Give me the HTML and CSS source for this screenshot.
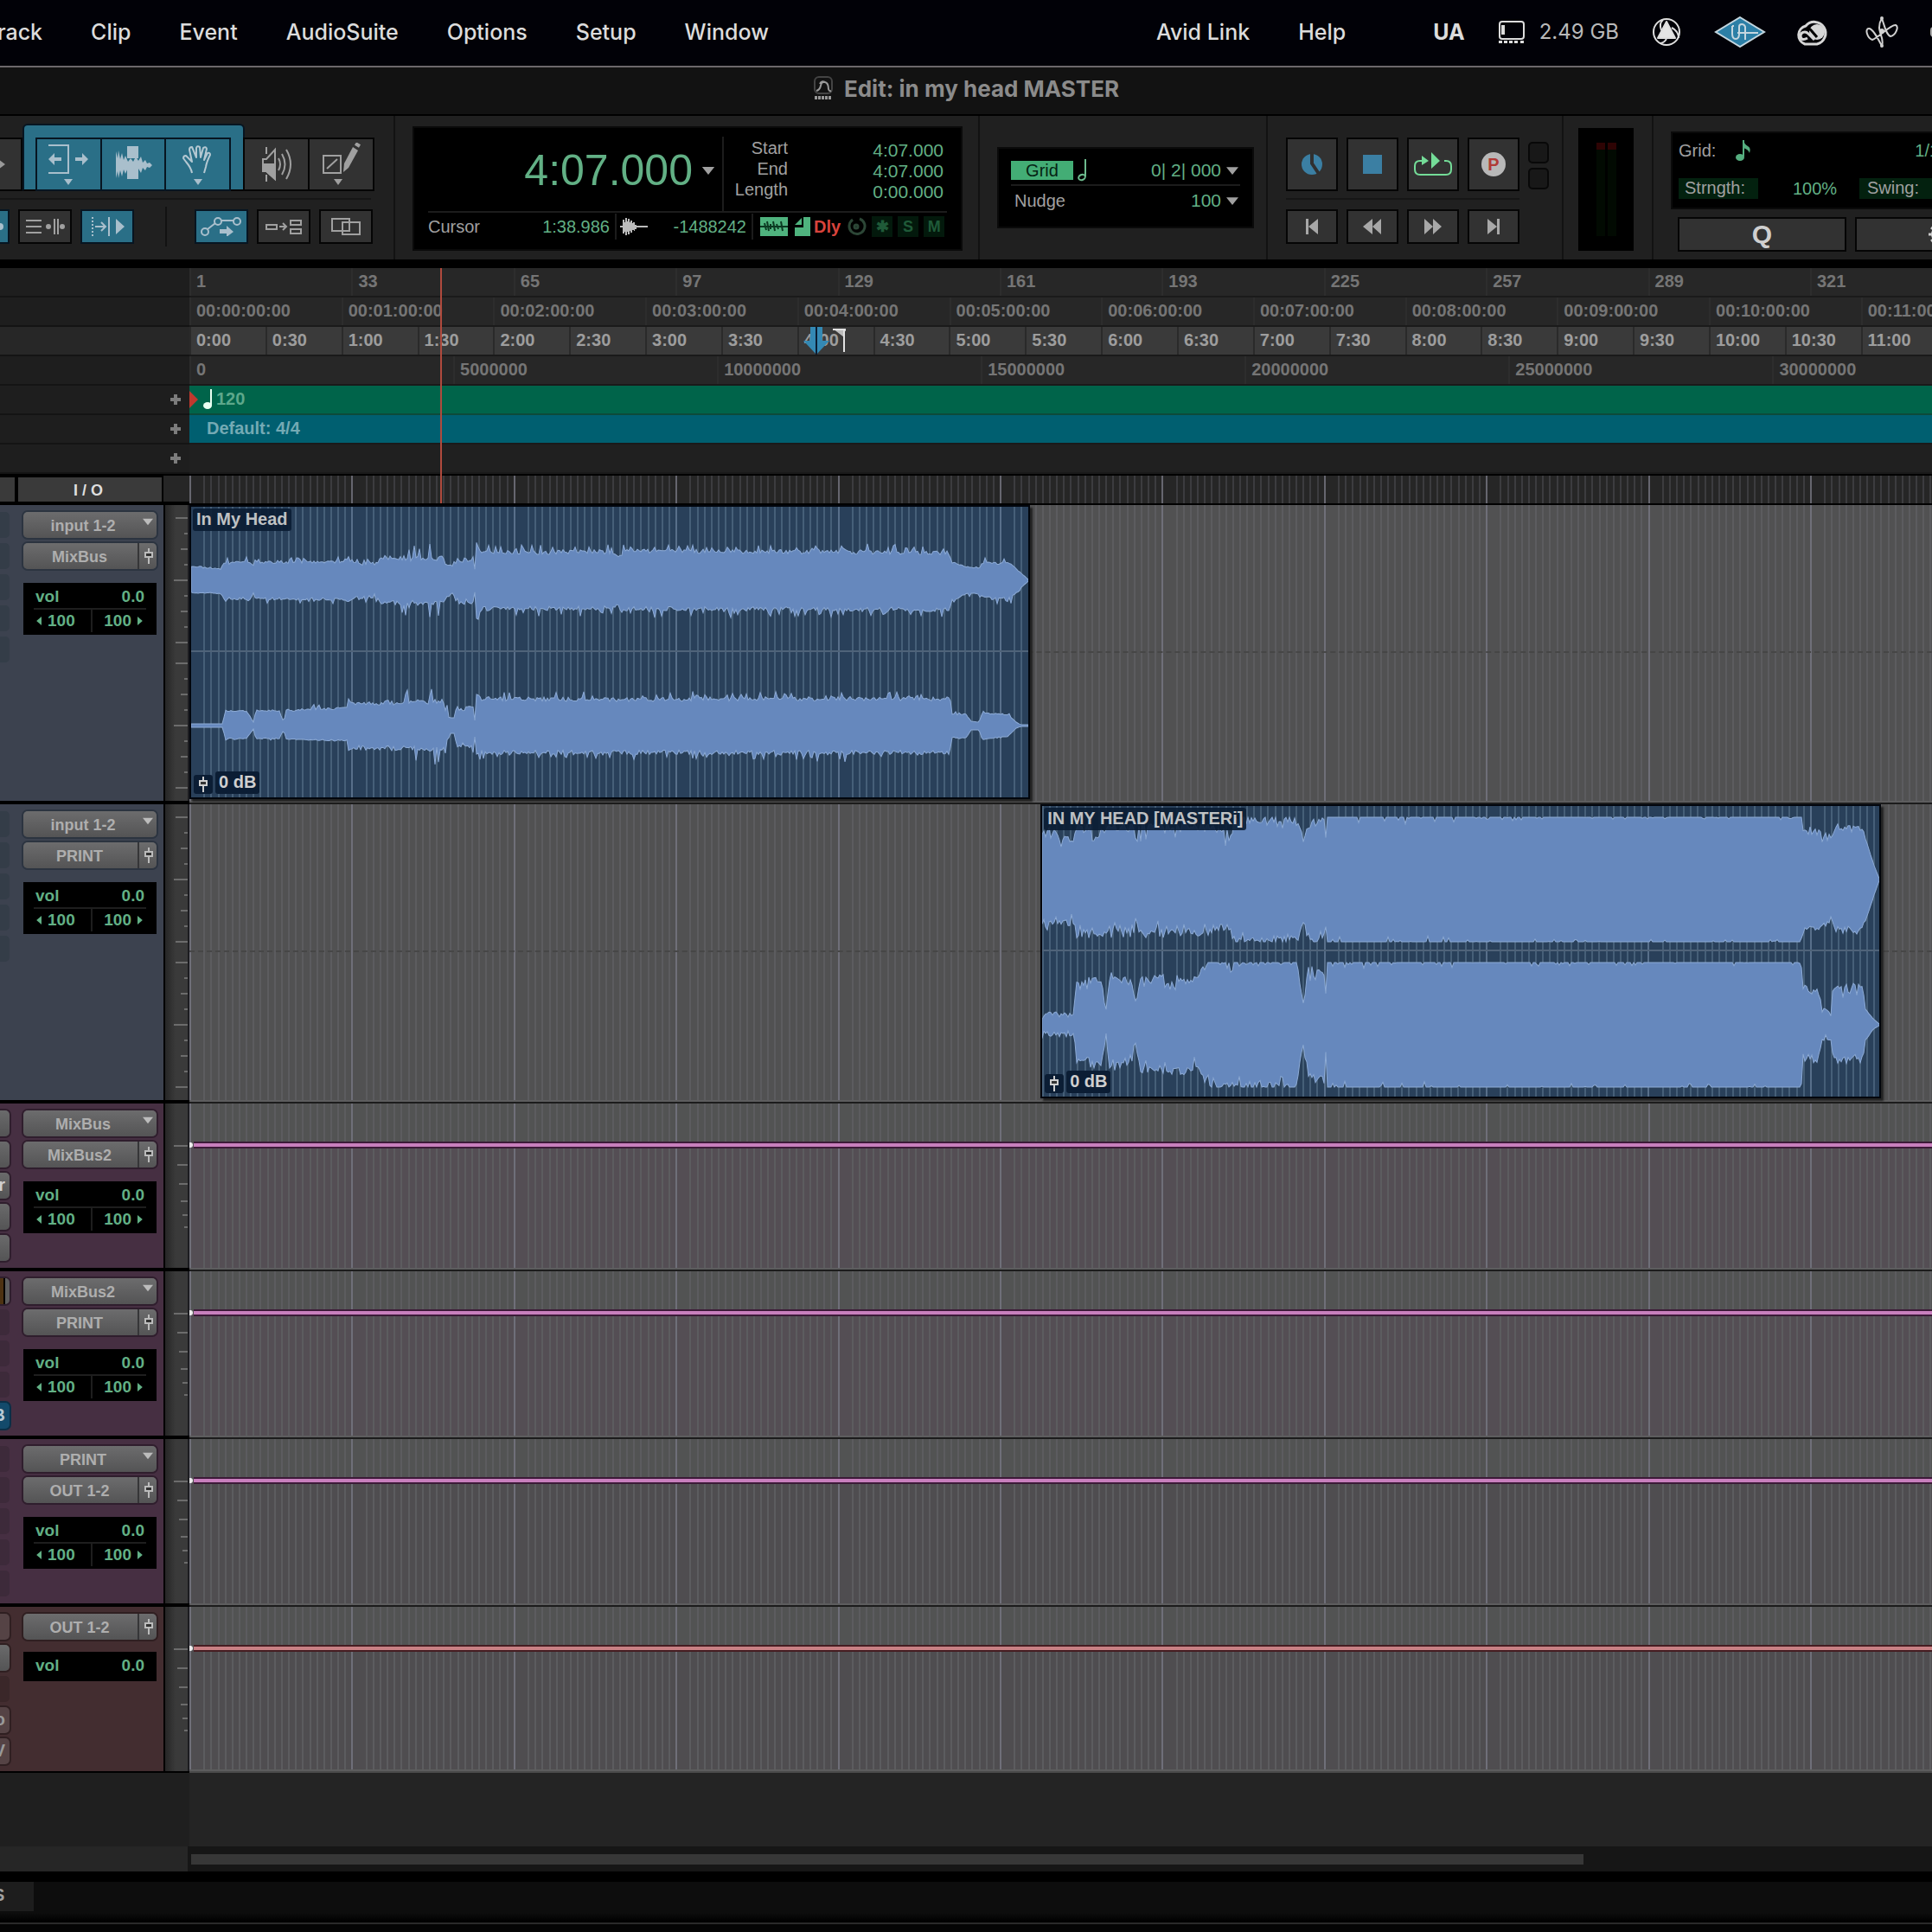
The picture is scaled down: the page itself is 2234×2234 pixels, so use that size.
FILE: index.html
```html
<!DOCTYPE html>
<html lang="en">
<head>
<meta charset="utf-8">
<title>Edit: in my head MASTER</title>
<link rel="stylesheet" href="styles.css">
</head>
<body>
<svg class="defs" aria-hidden="true">
  <symbol id="fader" viewBox="0 0 12 20"><path d="M6 1v18" stroke="currentColor" stroke-width="2"/><rect x="2" y="6" width="8" height="5" fill="#333" stroke="currentColor" stroke-width="2"/></symbol>
  <symbol id="down" viewBox="0 0 16 10"><path d="M0 0h16l-8 10z" fill="currentColor"/></symbol>
  <symbol id="left" viewBox="0 0 8 12"><path d="M7 0v12L0 6z" fill="currentColor"/></symbol>
  <symbol id="right" viewBox="0 0 8 12"><path d="M1 0v12l7-6z" fill="currentColor"/></symbol>
  <symbol id="plus" viewBox="0 0 14 14"><path d="M7 1v12M1 7h12" stroke="currentColor" stroke-width="4"/></symbol>
  <symbol id="scale-audio" viewBox="0 0 26 342"><path d="M12 15h14M22 33h4M18 51h8M22 69h4M10 87h16M22 105h4M18 123h8M22 141h4M12 159h14M12 183h14M22 201h4M18 219h8M22 237h4M10 255h16M22 273h4M18 291h8M22 309h4M12 327h14" stroke="#6c6c6c" stroke-width="2"/></symbol>
  <symbol id="scale-vol" viewBox="0 0 26 190"><path d="M10 49h16M14 71h12M16 93h10M18 113h8M20 129h6M22 143h4" stroke="#6c6c6c" stroke-width="2"/></symbol>
</svg>

<nav class="menubar" aria-label="Application menu">
  <div class="menus">
    <a href="#track">Track</a><a href="#clip">Clip</a><a href="#event">Event</a><a href="#audiosuite">AudioSuite</a><a href="#options">Options</a><a href="#setup">Setup</a><a href="#window">Window</a>
  </div>
  <div class="menus second"><a href="#avid">Avid Link</a><a href="#help">Help</a></div>
  <div class="status">
    <b class="ua">UA</b>
    <span class="mem">
      <svg width="32" height="28" viewBox="0 0 32 28" fill="none" stroke="#dcdcdc" stroke-width="2"><rect x="2" y="2" width="28" height="20" rx="3"/><path d="M6 6v11" stroke-width="4"/><path d="M3 24v3M9 24v3M15 24v3M21 24v3M28 24v3" stroke-width="4"/></svg>
      2.49 GB
    </span>
    <svg class="i1" width="34" height="34" viewBox="0 0 34 34" fill="none" stroke="#dedede" stroke-width="2"><circle cx="17" cy="17" r="15"/><path d="M17 5 27 24H7z" fill="#e4e4e4" stroke-linejoin="round"/><path d="M23 12q8 4 8 12M13 3Q8 7 11 15M9 30q5 0 8-5"/></svg>
    <svg class="i2" width="60" height="36" viewBox="0 0 60 36" fill="none"><path d="M30 1 58 18 30 35 2 18z" fill="#2c7fa6" stroke="#c4d6df" stroke-width="2"/><path d="M21 11v9q0 6 4 6t4-6V12q0-3 3-3t4 3v15M27 19h24M21 11h2" stroke="#c4d6df" stroke-width="2"/></svg>
    <svg class="i3" width="42" height="32" viewBox="0 0 42 32" fill="none" stroke="#d6d6d6"><path d="M13 30h14a13 13 0 1 0-13-21 11 11 0 0 0-1 21z" stroke-width="3"/><circle cx="27" cy="16" r="9" fill="#d6d6d6" stroke="none"/><path d="M16 23q-7 4-8-2 0-5 5-5 2 0 4 2l7 7" stroke-width="3"/><path d="M15 12q4 0 6 3l6 7" stroke="#000" stroke-width="3"/></svg>
    <svg class="i4" width="40" height="38" viewBox="0 0 40 38" fill="none" stroke="#d0d0d0" stroke-width="2" stroke-linejoin="round"><path d="M20 3C23 12 25 22 30 24 36 23 40 13 36 11 30 10 16 26 9 28 3 26 0 15 5 15 10 15 16 28 20 35 23 28 17 20 17 14Q17 8 20 3"/><circle cx="20" cy="3" r="1"/><circle cx="20" cy="35" r="1"/><circle cx="20" cy="18" r="2" fill="#d0d0d0"/></svg>
    <svg class="i5" width="30" height="12"><rect width="30" height="12" rx="4" fill="#aaa"/></svg>
  </div>
</nav>

<header class="titlebar">
  <svg width="24" height="30" viewBox="0 0 24 30" fill="none" stroke="#999" stroke-width="2"><rect x="2" y="1" width="20" height="19" rx="5" stroke="#444"/><path d="M4 17q4-1 5-6 1-5 5-4t4 8q1 3 3 2M8 9q2-4 6-2"/><path d="M2 25h20" stroke-width="4" stroke-dasharray="3 1"/></svg>
  <h1>Edit: in my head MASTER</h1>
</header>

<section class="toolbar">
  <div class="panel tools">
    <div class="row big">
      <button class="tool stub" aria-label="Zoom"><svg width="10" height="18" viewBox="0 0 10 18"><path d="M-6 0 6 9-6 18z" fill="#999"/></svg></button>
      <div class="smart">
        <button class="tool on" aria-label="Trim"><svg width="50" height="50" viewBox="0 0 50 50" fill="none" stroke="#a9bfcc" stroke-width="2"><path d="M2 3h23v32H2"/><path d="m2 19 7-7v5h8v4H9v5zM48 19l-7-7v5h-8v4h8v5z" fill="#a9bfcc" stroke="none"/><path d="M20 42h10l-5 7z" fill="#a9bfcc" stroke="none"/></svg></button>
        <button class="tool on" aria-label="Select"><svg width="50" height="50" viewBox="0 0 50 50" fill="#a9bfcc"><path d="M18 4h13v14H18zM18 28h13v14H18z"/><path d="M5 10l2 8 1-9 2 10 2-7 2 8 2-5 3 7 3-4 3 4 3-6 3 5 3-5 2 7 3-3 2 4 3-1 3 3-3 3-3-1-2 4-3-3-2 6-3-5-3 6-3-7-3 5-3-5-3 7-2-5-2 8-2-7-2 9-1-8-2 8z"/></svg></button>
        <button class="tool on" aria-label="Grabber"><svg width="50" height="50" viewBox="0 0 50 50" fill="none" stroke="#b4c8d2" stroke-width="2" stroke-linejoin="round"><path d="M18 35Q17 29 11 22L8 18q0-3 3-3l7 7L15 8q0-3 3-3l5 12V6q1-3 4-1l1 12L31 6q3-2 4 1l-3 13 4-8q3-1 3 2-4 8-5 14l-2 7"/><path d="M20 42h10l-5 7z" fill="#a9bfcc" stroke="none"/></svg></button>
      </div>
      <button class="tool" aria-label="Scrubber"><svg width="40" height="42" viewBox="0 0 40 42" fill="none" stroke="#a0a0a0" stroke-width="2"><path d="M8 1v8M8 33v8"/><path d="M4 15h4L18 4v34L8 29H4z"/><path d="M4 21h14v17L8 29H4z" fill="#a0a0a0"/><path d="M22 14q4 7 0 14M26 9q7 12 0 24M31 4q10 17 0 34"/></svg></button>
      <button class="tool" aria-label="Pencil"><svg width="50" height="50" viewBox="0 0 50 50" fill="none" stroke="#a0a0a0" stroke-width="2"><path d="M4 15h20v20H4zM8 30l12-11"/><path d="M38 5l6 4-11 20-6 5 1-10z" fill="#a0a0a0" stroke="none"/><path d="M41 1l5 3" stroke-width="4"/><path d="M16 42h10l-5 7z" fill="#a0a0a0" stroke="none"/></svg></button>
    </div>
    <hr>
    <div class="row small">
      <button class="sm on stub2" aria-label="Zoom toggle"><svg width="8" height="10" viewBox="0 0 8 10"><circle cx="0" cy="5" r="4" fill="#a9bfcc"/></svg></button>
      <button class="sm" aria-label="Tab to transient"><svg width="46" height="18" viewBox="0 0 46 18" stroke="#a0a0a0" stroke-width="2" fill="#a0a0a0"><path d="M1 2h18M1 9h18M1 16h18M34 0v18M38 0v18"/><circle cx="27" cy="9" r="2"/><circle cx="43" cy="9" r="2"/></svg></button>
      <button class="sm on" aria-label="Insertion follows playback"><svg width="42" height="22" viewBox="0 0 42 22" stroke="#a9bfcc" stroke-width="2" fill="none"><path d="M4 0v22" stroke-dasharray="2 2"/><path d="M7 11h12M14 6l5 5-5 5M23 0v22"/><path d="M31 2l10 9-10 9z" fill="#a9bfcc" stroke="none"/></svg></button>
      <i class="vr"></i>
      <button class="sm on" aria-label="Link timeline"><svg width="48" height="22" viewBox="0 0 48 22" stroke="#a9bfcc" stroke-width="2" fill="none"><path d="M8 14 17 7M24 4h15"/><circle cx="5" cy="17" r="4"/><circle cx="20" cy="5" r="4"/><circle cx="42" cy="5" r="4"/><path d="M22 14h8v-4l8 7-8 6v-4h-8z" fill="#a9bfcc" stroke="none"/></svg></button>
      <button class="sm" aria-label="Link track"><svg width="44" height="18" viewBox="0 0 44 18" stroke="#a0a0a0" stroke-width="2" fill="none"><path d="M2 7h12v5H2zM30 2h12v5H30zM30 12h12v5H30zM17 9h8M21 5l4 4-4 4"/></svg></button>
      <button class="sm" aria-label="Mirrored editing"><svg width="36" height="22" viewBox="0 0 36 22" stroke="#a0a0a0" stroke-width="2" fill="none"><path d="M2 2h20v14H2z"/><path d="M14 6h20v14H14z"/></svg></button>
    </div>
  </div>

  <div class="panel counters">
    <div class="lcd counter">
      <div class="top">
        <div class="main"><output>4:07.000</output><svg class="tri" width="16" height="9"><use href="#down"/></svg></div>
        <dl class="sel"><dt>Start</dt><dd>4:07.000</dd><dt>End</dt><dd>4:07.000</dd><dt>Length</dt><dd>0:00.000</dd></dl>
      </div>
      <div class="cursor">
        <span class="cur"><label>Cursor</label><output>1:38.986</output></span>
        <span class="smp"><svg width="32" height="20" viewBox="0 0 32 20"><path d="M0 9h3V2h2v3h1V0h2v4h1V1h2v4h1V3h2v3h1V5h2v3h2v1h13v2H19v2h-2v2h-1v-1h-2v3h-2v-2h-1v4H9v-3H8v4H6v-4H5v2H3v-7H0z" fill="#bbb"/></svg><output>-1488242</output></span>
        <span class="flags">
          <svg width="32" height="22" viewBox="0 0 32 22"><rect width="32" height="22" fill="#4fb37e"/><path d="M0 11h32M5 7l2 8M8 5l2 11M12 8v6M15 5l2 11M19 8l2 6M24 5l2 11" stroke="#0b3a22" stroke-width="2" fill="none"/></svg>
          <svg width="18" height="22" viewBox="0 0 18 22"><path d="M10 0h8v22H0V12h10zM8 1v8H0z" fill="#4fb37e"/></svg>
          <b class="dly">Dly</b>
          <svg width="24" height="24" viewBox="0 0 24 24" fill="none" stroke="#2c4636" stroke-width="3"><path d="M8 4A9 9 0 1 0 16 3"/><circle cx="12" cy="12" r="2"/></svg>
          <b class="dim">✱</b><b class="dim">S</b><b class="dim">M</b>
        </span>
      </div>
    </div>
  </div>

  <div class="panel gridpanel">
    <div class="lcd grid-box">
      <div class="gline"><button class="gridmode">Grid</button><svg width="12" height="26" viewBox="0 0 12 26"><path d="M10 0v20" stroke="#6dbb8e" stroke-width="2"/><ellipse cx="6" cy="21" rx="4" ry="3" fill="none" stroke="#6dbb8e" stroke-width="2" transform="rotate(-25 6 21)"/></svg><output>0| 2| 000</output><svg class="tri" width="14" height="9"><use href="#down"/></svg></div>
      <div class="gline nudge"><label>Nudge</label><output>100</output><svg class="tri" width="14" height="9"><use href="#down"/></svg></div>
    </div>
  </div>

  <div class="panel transport">
    <div class="tgrid">
      <button class="tb" aria-label="Online"><svg width="28" height="28" viewBox="0 0 28 28"><circle cx="14" cy="14" r="12" fill="#3b7fa3"/><path d="M14 0v13l8 12" stroke="#303030" stroke-width="4" fill="none"/></svg></button>
      <button class="tb" aria-label="Stop"><svg width="22" height="22"><rect width="22" height="22" fill="#3b7fa3"/></svg></button>
      <button class="tb" aria-label="Loop play"><svg width="46" height="28" viewBox="0 0 46 28" fill="none" stroke="#74dc98" stroke-width="2"><path d="M10 10H8q-6 0-6 6v4q0 6 6 6h30q6 0 6-6v-4q0-6-6-6h-2"/><path d="M10 4l8 6-8 5zM21 0l10 10-10 9z" fill="#74dc98" stroke="none"/></svg></button>
      <button class="tb rec" aria-label="Record"><span>P</span></button>
      <div class="leds"><i></i><i></i></div>
      <hr>
      <button class="ts" aria-label="Return to zero"><svg width="16" height="18"><path d="M1 0h3v18H1zM15 0v18L4 9z" fill="#a8a8a8"/></svg></button>
      <button class="ts" aria-label="Rewind"><svg width="22" height="18"><path d="M11 0v18L0 9zM21 0v18L11 9z" fill="#a8a8a8"/></svg></button>
      <button class="ts" aria-label="Fast forward"><svg width="22" height="18"><path d="M1 0v18l10-9zM11 0v18l10-9z" fill="#a8a8a8"/></svg></button>
      <button class="ts" aria-label="Go to end"><svg width="16" height="18"><path d="M1 0v18l11-9zM12 0h3v18h-3z" fill="#a8a8a8"/></svg></button>
    </div>
  </div>

  <div class="panel meterpanel"><div class="meter"><i></i><i></i></div></div>

  <div class="panel quant">
    <div class="lcd qbox">
      <div class="qline"><label>Grid:</label><svg width="20" height="26" viewBox="0 0 20 26"><path d="M10 1v19" stroke="#55ae7f" stroke-width="2"/><path d="M10 1q1 5 5 7t2 8q-1-4-7-6z" fill="#55ae7f"/><ellipse cx="6" cy="21" rx="5" ry="4" fill="#55ae7f"/></svg><output>1/16</output></div>
      <div class="qline"><label class="tag">Strngth:</label><output class="pct">100%</output><label class="tag swing">Swing:</label></div>
    </div>
    <div class="qbtns"><button class="qb">Q</button><button class="qb" aria-label="Settings"><svg width="28" height="24" viewBox="0 0 28 24"><circle cx="14" cy="12" r="8" fill="none" stroke="#ccc" stroke-width="4"/><path d="M14 0v24M1 12h26M4 4l20 16M24 4 4 20" stroke="#ccc" stroke-width="3" stroke-dasharray="5 17"/></svg></button></div>
  </div>
</section>

<section class="rulers">
  <div class="heads">
    <div class="rh"></div><div class="rh"></div><div class="rh lit"></div><div class="rh"></div>
    <div class="rh"><button aria-label="Add tempo change"><svg width="14" height="14"><use href="#plus"/></svg></button></div>
    <div class="rh"><button aria-label="Add meter change"><svg width="14" height="14"><use href="#plus"/></svg></button></div>
    <div class="rh"><button aria-label="Add marker"><svg width="14" height="14"><use href="#plus"/></svg></button></div>
    <div class="colhead"><span class="prev"></span><span class="io">I / O</span></div>
  </div>
  <div class="timeline">
    <div class="ruler bars"><span>1</span><span>33</span><span>65</span><span>97</span><span>129</span><span>161</span><span>193</span><span>225</span><span>257</span><span>289</span><span>321</span></div>
    <div class="ruler code"><span>00:00:00:00</span><span>00:01:00:00</span><span>00:02:00:00</span><span>00:03:00:00</span><span>00:04:00:00</span><span>00:05:00:00</span><span>00:06:00:00</span><span>00:07:00:00</span><span>00:08:00:00</span><span>00:09:00:00</span><span>00:10:00:00</span><span>00:11:00:00</span></div>
    <div class="ruler mins"><span>0:00</span><span>0:30</span><span>1:00</span><span>1:30</span><span>2:00</span><span>2:30</span><span>3:00</span><span>3:30</span><span>4:00</span><span>4:30</span><span>5:00</span><span>5:30</span><span>6:00</span><span>6:30</span><span>7:00</span><span>7:30</span><span>8:00</span><span>8:30</span><span>9:00</span><span>9:30</span><span>10:00</span><span>10:30</span><span>11:00</span>
      <svg class="sel-start" width="32" height="32" viewBox="0 0 32 32"><path d="M9 0h14v16h8L16 32 1 16h8z" fill="#3489b4"/><path d="M16 0v32" stroke="#0b1d33" stroke-width="2"/></svg>
      <svg class="flag" width="16" height="28" viewBox="0 0 16 28"><path d="M0 0h15v3h-2v7z" fill="#bcbcbc"/><path d="M0 1h15M13 1v26" stroke="#e2e2e2" stroke-width="2"/></svg>
    </div>
    <div class="ruler samples"><span>0</span><span>5000000</span><span>10000000</span><span>15000000</span><span>20000000</span><span>25000000</span><span>30000000</span></div>
    <div class="ruler tempo"><svg width="10" height="20"><path d="M0 0 10 10 0 20z" fill="#c0392e"/></svg><svg width="12" height="24"><path d="M10 0v19" stroke="#eafff2" stroke-width="2"/><ellipse cx="6" cy="19" rx="5" ry="4" fill="#eafff2"/></svg><span>120</span></div>
    <div class="ruler metre"><span>Default: 4/4</span></div>
    <div class="ruler markers"></div>
    <div class="strip grid"></div>
    <i class="playhead"></i>
  </div>
</section>

<main class="tracks">
  <article class="track tall blue">
    <div class="inserts"><i></i><i></i><i></i><i></i><i></i></div>
    <div class="io-col">
      <button class="sel-in">input 1-2<svg width="12" height="9"><use href="#down"/></svg></button>
      <button class="sel-out"><span>MixBus</span><svg width="12" height="20"><use href="#fader"/></svg></button>
      <div class="vol"><p><label>vol</label><output>0.0</output></p><p class="pan"><span><svg width="7" height="10"><use href="#left"/></svg>100</span><span>100<svg width="7" height="10"><use href="#right"/></svg></span></p></div>
    </div>
    <svg class="scale" width="26" height="342"><use href="#scale-audio"/></svg>
    <div class="lane grid">
      <div class="clip grid" style="left:0;width:48.24%">
        <svg class="wave" data-wave="mix" viewBox="0 0 968 336" preserveAspectRatio="none"></svg>
        <span class="name">In My Head</span>
        <div class="gain"><svg width="22" height="22" viewBox="-5 -1 22 22"><use href="#fader" width="12" height="20"/></svg><span>0 dB</span></div>
      </div>
    </div>
  </article>

  <article class="track tall blue">
    <div class="inserts"><i></i><i></i><i></i><i></i><i></i></div>
    <div class="io-col">
      <button class="sel-in">input 1-2<svg width="12" height="9"><use href="#down"/></svg></button>
      <button class="sel-out"><span>PRINT</span><svg width="12" height="20"><use href="#fader"/></svg></button>
      <div class="vol"><p><label>vol</label><output>0.0</output></p><p class="pan"><span><svg width="7" height="10"><use href="#left"/></svg>100</span><span>100<svg width="7" height="10"><use href="#right"/></svg></span></p></div>
    </div>
    <svg class="scale" width="26" height="342"><use href="#scale-audio"/></svg>
    <div class="lane grid">
      <div class="clip grid" style="left:48.84%;width:48.24%">
        <svg class="wave" data-wave="master" viewBox="0 0 968 336" preserveAspectRatio="none"></svg>
        <span class="name">IN MY HEAD [MASTERi]</span>
        <div class="gain"><svg width="22" height="22" viewBox="-5 -1 22 22"><use href="#fader" width="12" height="20"/></svg><span>0 dB</span></div>
      </div>
    </div>
  </article>

  <article class="track plum">
    <div class="inserts"><i class="g"></i><i class="g"></i><i class="g">r</i><i class="g"></i><i class="g"></i></div>
    <div class="io-col">
      <button class="sel-in">MixBus<svg width="12" height="9"><use href="#down"/></svg></button>
      <button class="sel-out"><span>MixBus2</span><svg width="12" height="20"><use href="#fader"/></svg></button>
      <div class="vol"><p><label>vol</label><output>0.0</output></p><p class="pan"><span><svg width="7" height="10"><use href="#left"/></svg>100</span><span>100<svg width="7" height="10"><use href="#right"/></svg></span></p></div>
    </div>
    <svg class="scale" width="26" height="190"><use href="#scale-vol"/></svg>
    <div class="lane grid auto tint"><i class="curve"></i></div>
  </article>

  <article class="track plum">
    <div class="inserts"><i class="g amber"></i><i></i><i></i><i></i><i class="b">B</i></div>
    <div class="io-col">
      <button class="sel-in">MixBus2<svg width="12" height="9"><use href="#down"/></svg></button>
      <button class="sel-out"><span>PRINT</span><svg width="12" height="20"><use href="#fader"/></svg></button>
      <div class="vol"><p><label>vol</label><output>0.0</output></p><p class="pan"><span><svg width="7" height="10"><use href="#left"/></svg>100</span><span>100<svg width="7" height="10"><use href="#right"/></svg></span></p></div>
    </div>
    <svg class="scale" width="26" height="190"><use href="#scale-vol"/></svg>
    <div class="lane grid auto tint"><i class="curve"></i></div>
  </article>

  <article class="track plum">
    <div class="inserts"><i></i><i></i><i></i><i></i><i></i></div>
    <div class="io-col">
      <button class="sel-in">PRINT<svg width="12" height="9"><use href="#down"/></svg></button>
      <button class="sel-out"><span>OUT 1-2</span><svg width="12" height="20"><use href="#fader"/></svg></button>
      <div class="vol"><p><label>vol</label><output>0.0</output></p><p class="pan"><span><svg width="7" height="10"><use href="#left"/></svg>100</span><span>100<svg width="7" height="10"><use href="#right"/></svg></span></p></div>
    </div>
    <svg class="scale" width="26" height="190"><use href="#scale-vol"/></svg>
    <div class="lane grid auto"><i class="curve"></i></div>
  </article>

  <article class="track wine last">
    <div class="inserts"><i class="f"></i><i class="g"></i><i></i><i class="f">o</i><i class="f">V</i></div>
    <div class="io-col">
      <button class="sel-out"><span>OUT 1-2</span><svg width="12" height="20"><use href="#fader"/></svg></button>
      <div class="vol single"><p><label>vol</label><output>0.0</output></p></div>
    </div>
    <svg class="scale" width="26" height="190"><use href="#scale-vol"/></svg>
    <div class="lane grid auto red"><i class="curve"></i></div>
  </article>
</main>

<div class="empty"><i></i></div>
<div class="scroller"><i class="corner"></i><div class="bar"><i style="width:80%"></i></div></div>
<footer class="tabs"><button>S</button></footer>
<script src="script.js"></script>
</body>
</html>
```
FILE: styles.css
```css
* { box-sizing: border-box; }
:root { --green: #62b085; --grey: #a0a0a0; --head: 219px; }
body {
  margin: 0; min-height: 100vh; display: flex; flex-direction: column; overflow-x: hidden;
  background: #000; color: var(--grey);
  font: 20px/24px "Liberation Sans", Arial, sans-serif;
}
button { margin: 0; padding: 0; border: 0; background: none; color: inherit; font: inherit; display: flex; align-items: center; justify-content: center; }
svg { display: block; flex: none; }
hr { margin: 0; border: 0; height: 2px; background: #161616; }
p, dl, dd, h1 { margin: 0; }
.defs { position: absolute; width: 0; height: 0; }

.menubar { height: 78px; flex: none; display: flex; align-items: center; background: #010107; border-bottom: 2px solid #6b676a; font: 500 25px/30px Inter, sans-serif; color: #dcdcdc; white-space: nowrap; overflow: hidden; padding-bottom: 2px; }
.menubar a { color: inherit; text-decoration: none; }
.menus { display: flex; gap: 56px; margin-left: -18px; }
.menus.second { margin-left: auto; }
.status { display: flex; align-items: center; margin-left: 101px; margin-right: -28px; }
.mem { display: flex; gap: 16px; align-items: center; margin-left: 38px; font-weight: 400; font-size: 24px; color: #b9b9b9; }
.i1 { margin-left: 38px; }
.i2 { margin-left: 38px; }
.i3 { margin-left: 32px; }
.i4 { margin-left: 40px; }
.i5 { margin-left: 36px; }

.titlebar { height: 56px; flex: none; display: flex; align-items: center; justify-content: center; gap: 12px; padding-bottom: 4px; background: #121212; border-bottom: 2px solid #000; }
.titlebar h1 { font: 700 26px/30px Inter, sans-serif; color: #8b8b8b; }

.toolbar { height: 176px; flex: none; display: flex; background: #202020; border-bottom: 10px solid #000; overflow: hidden; }
.panel { flex: none; border-right: 2px solid #121212; }
.panel:last-child { flex: 1 0 auto; border: 0; }
.lcd { background: #000; color: var(--green); border: 2px solid #0a0a0a; }
.lcd label, .lcd dt { color: var(--grey); }
.tri { color: var(--grey); }

.tools { width: 457px; padding-top: 9px; }
.row { display: flex; }
.big { align-items: flex-end; height: 78px; }
.tool { height: 62px; width: 77px; background: #323232; border: 2px solid #050505; margin-left: -2px; }
.tool:first-child { margin-left: 0; }
.stub { width: 26px; border-left: 0; justify-content: flex-start; }
.smart { display: flex; align-items: flex-end; height: 78px; width: 257px; padding: 0 14px 0 13px; background: #2a6f87; border: 2px solid #071521; border-bottom-color: #050505; border-radius: 6px 6px 0 0; margin-bottom: 0; }
.smart .tool { flex: 1; width: auto; height: 62px; margin-bottom: -2px; }
.tool.on, .sm.on { background: #2a6f87; border-color: #071521; }
.tools hr { width: 429px; margin: 8px 0 11px; }
.small { align-items: center; gap: 10px; height: 40px; }
.sm { width: 62px; height: 40px; background: #323232; border: 2px solid #050505; }
.stub2 { width: 11px; border-left: 0; justify-content: flex-start; }
.vr { width: 2px; height: 46px; background: #121212; margin: 0 22px 0 26px; }

.counters { width: 676px; padding: 12px 18px 0 20px; }
.counter { height: 144px; padding: 10px 16px 0; }
.top { display: flex; height: 88px; border-bottom: 2px solid #1c1c1c; }
.main { width: 342px; display: flex; align-items: center; justify-content: flex-end; gap: 10px; border-right: 2px solid #1c1c1c; padding: 0 8px 8px 0; font-size: 50px; line-height: 56px; }
.sel { flex: 1; display: grid; grid-template-columns: 74px 1fr; grid-auto-rows: 24px; text-align: right; padding: 2px 4px 0 0; }
.sel dt { line-height: 22px; }
.sel dd { font-size: 21px; line-height: 28px; }
.cursor { display: flex; height: 32px; align-items: center; }
.cursor > span { display: flex; align-items: center; height: 30px; }
.cur { width: 218px; justify-content: space-between; border-right: 2px solid #1c1c1c; padding-right: 6px; }
.smp { width: 158px; justify-content: space-between; border-right: 2px solid #1c1c1c; padding: 0 6px 0 4px; }
.flags { gap: 6px; padding-left: 8px; }
.flags svg + svg { margin-left: 2px; }
.dly { color: #d8433c; margin-left: -2px; }
.dim { width: 24px; height: 24px; background: #03190c; color: #1f5a38; text-align: center; font-size: 18px; line-height: 24px; }

.gridpanel { width: 333px; padding: 36px 14px 0 20px; }
.grid-box { height: 94px; padding: 9px 14px; }
.gline { display: flex; align-items: center; height: 32px; gap: 6px; padding: 0 2px 0 0; }
.gline output { margin-left: auto; font-size: 21px; }
.gline + .gline { border-top: 2px solid #1c1c1c; padding-left: 4px; height: 36px; }
.gridmode { width: 72px; height: 22px; background: #43ad75; color: #062414; margin-right: -2px; }

.transport { width: 342px; padding: 25px 16px 0 21px; }
.tgrid { display: grid; grid-template-columns: 60px 60px 60px 60px 24px; column-gap: 10px; }
.tb { height: 62px; background: #323232; border: 2px solid #050505; }
.ts { height: 40px; background: #323232; border: 2px solid #050505; }
.tgrid hr { grid-column: 1 / 5; margin: 8px 0 11px; }
.tgrid hr + .ts { grid-column: 1; }
.rec span { width: 28px; height: 28px; border-radius: 50%; background: #b8b8b8; color: #b03a36; font-weight: bold; line-height: 28px; text-align: center; }
.leds { display: flex; flex-direction: column; gap: 5px; padding-top: 5px; }
.leds i { height: 25px; background: #181818; border: 2px solid #080808; border-radius: 5px; }

.meterpanel { width: 104px; padding: 14px 18px 0 17px; }
.meter { width: 64px; height: 142px; background: #000; display: flex; justify-content: center; gap: 3px; padding-top: 17px; }
.meter i { width: 10px; height: 108px; background: linear-gradient(#2e0404 8px, #020a02 8px); }

.quant { padding: 18px 0 0 20px; width: 320px; }
.qbox { width: 400px; height: 90px; padding: 6px 7px 0 7px; }
.qline { display: flex; align-items: center; height: 28px; }
.qline svg { margin-left: 22px; }
.qline output { margin-left: 188px; }
.qline + .qline { margin-top: 18px; height: 24px; }
.tag { width: 92px; height: 24px; background: #03210f; padding-left: 7px; line-height: 22px; }
.qline .pct { margin-left: 40px; width: 77px; }
.swing { width: 120px; padding-left: 9px; }
.qbtns { display: flex; gap: 10px; margin: 9px 0 0 8px; }
.qb { flex: none; width: 195px; height: 40px; background: #323232; border: 2px solid #050505; color: #cfcfcf; font: bold 30px/36px "Liberation Sans", Arial, sans-serif; }

.rulers { display: grid; grid-template-columns: var(--head) 1fr; flex: none; }
.rh { height: 34px; background: #1e1e1e; border-bottom: 2px solid #141414; display: flex; align-items: center; justify-content: flex-end; padding-right: 9px; color: #7c7c7c; }
.rh.lit { background: #272727; }
.colhead { display: flex; gap: 4px; height: 36px; padding: 4px 0 4px; background: #000; font-weight: bold; font-size: 18px; line-height: 30px; text-align: center; color: #dedede; }
.colhead::after { content: ""; flex: 1; background: #262626; margin: -2px 0 0 -2px; }
.prev { width: 17px; background: #3a3a3a; }
.io { width: 166px; background: #3a3a3a; padding-right: 4px; }
.timeline { position: relative; overflow: hidden; min-width: 0; }
.ruler { position: relative; display: flex; height: 34px; background: #272727; border-bottom: 2px solid #1a1a1a; font-weight: bold; line-height: 30px; color: #757575; white-space: nowrap; overflow: hidden; }
.ruler span { flex: none; padding-left: 6px; }
.bars span, .code span, .mins span, .samples span { border-left: 2px solid #2d2d2d; }
.bars span { width: 9.3%; }
.code span { width: 8.72%; }
.mins span { width: 4.36%; border-left-color: #2a2a2a; }
.samples span { width: 15.14%; }
.mins { background: #3a3a3a; color: #9d9d9d; }
.tempo { background: #00644a; color: #5da88b; align-items: center; border-color: #0d4a3a; }
.tempo svg + svg { margin-left: 5px; }
.tempo span { padding-left: 4px; line-height: 30px; margin-top: -3px; }
.metre { background: #005f70; color: #74aab4; }
.metre span { padding-left: 20px; }
.markers { background: #202020; }
.sel-start { position: absolute; left: 35.2%; top: 0; }
.flag { position: absolute; left: 36.9%; top: 2px; }
.strip { height: 36px; background: #262626; border-top: 2px solid #000; border-bottom: 2px solid #000; }
.playhead { position: absolute; left: 14.4%; top: 0; bottom: 2px; width: 2px; background: #b04a3d; }

.grid { position: relative; overflow: hidden; }
.grid-lines { position: absolute; left: 0; top: 0; width: 100%; height: 100%; }
.lane .minor { fill: #5c5c5f; }
.lane .major { fill: #6f6f79; }
.strip .minor { fill: #3c3c3f; }
.strip .major { fill: #66666f; }
.clip .minor { fill: #465f78; }
.clip .major { fill: #586f8a; }

.tracks { flex: none; }
.track { display: flex; height: 194px; border-bottom: 4px solid #000; }
.track.last { height: 192px; border-bottom-width: 2px; }
.tall { height: 346px; }
.blue { --panel: #3c424f; --slot: #343d48; --edge: #2c3440; }
.plum { --panel: #462f42; --slot: #3d2a3a; --edge: #2f1e2d; }
.wine { --panel: #432d30; --slot: #3a2729; --edge: #2f1f21; }
.inserts { width: 19px; background: var(--panel); padding-top: 8px; overflow: hidden; }
.inserts i { display: block; width: 11px; height: 30px; margin-bottom: 6px; background: var(--slot); border-radius: 0 5px 5px 0; font: bold 20px/28px "Liberation Sans", Arial, sans-serif; color: #cfcfcf; direction: rtl; padding-right: 5px; }
.inserts .g { background: linear-gradient(#6a6a6b, #545455); box-shadow: 0 0 0 2px var(--edge); }
.inserts .f { background: #554345; color: #999; box-shadow: 0 0 0 2px var(--edge); }
.inserts .b { background: #134a6b; color: #b9c9d4; box-shadow: 0 0 0 2px #0b2f47; }
.inserts .amber { background: linear-gradient(#000, #000) 4px 0 / 1px 30px no-repeat, linear-gradient(90deg, #4d3212 4px, #000 4px, #000 6px, #5c5c5d 6px); box-shadow: 0 0 0 2px var(--edge); }
.io-col { width: 170px; padding: 8px 8px 0; background: var(--panel); font-weight: bold; font-size: 18px; }
.sel-in, .sel-out { position: relative; width: 154px; height: 30px; margin-bottom: 6px; border-radius: 5px; background: linear-gradient(#6c6c6d, #545455); box-shadow: 0 0 0 2px var(--edge); color: #aeaeae; }
.sel-in { padding: 2px 16px 0 0; }
.sel-in svg { position: absolute; right: 4px; top: 7px; color: #bcbcbc; }
.sel-out { justify-content: flex-start; }
.sel-out span { width: 134px; height: 30px; line-height: 32px; border-right: 2px solid #363638; padding-right: 2px; }
.sel-out svg { margin-left: 5px; color: #bcbcbc; }
.vol { margin-top: 16px; height: 60px; padding: 3px 12px 0; background: #000; color: var(--green); font-size: 19px; line-height: 26px; }
.io-col .vol label { color: inherit; }
.vol.single { height: 34px; margin-top: 14px; }
.vol p { display: flex; justify-content: space-between; padding: 0 2px; }
.vol .pan { border-top: 2px solid #1e1e1e; padding: 0; }
.pan span { flex: 1; display: flex; align-items: center; justify-content: flex-end; gap: 6px; height: 26px; padding-right: 4px; }
.pan span:first-child { border-right: 2px solid #1e1e1e; justify-content: flex-start; padding-left: 3px; }
.scale { margin: 0; width: 30px; padding: 0 2px; background: linear-gradient(90deg, #000 2px, #262626 2px, #3a3a3a 14px, #3a3a3a 28px, #1c1c20 28px); }
.lane { flex: 1; min-width: 0; background: #515152; margin-bottom: -4px; border-bottom: 2px solid #1c1c1c; box-shadow: inset 2px 0 #6a6a72; }
.lane::before { content: ""; position: absolute; left: 0; right: 0; bottom: 0; height: 2px; background: #5d5d5e; z-index: 1; }
.tall .lane::after { content: ""; position: absolute; left: 0; right: 0; top: 169px; border-top: 2px dashed #464646; }
.last .lane { border-bottom-color: #4a4a4a; margin-bottom: -2px; }
.auto { background: linear-gradient(#525353 48px, #4f4d50 48px); }
.auto.tint { background: linear-gradient(#525353 48px, #544e54 48px); }
.curve { position: absolute; left: 5px; right: 0; top: 44px; height: 8px; background: #c87fbd; border: solid #3c1b38; border-width: 2px 0; }
.curve::before { content: ""; position: absolute; left: -5px; top: -1px; width: 4px; height: 6px; background: #eee; border-radius: 0 3px 3px 0; }
.red .curve { background: #c98084; border-color: #451d22; }
.clip { position: absolute; z-index: 1; top: 0; height: 340px; background: #29405a; border: 2px solid #02060d; box-shadow: 3px 3px 2px #222; }
.clip::before { content: ""; position: absolute; z-index: 1; left: 0; right: 0; top: 166px; height: 2px; background: #4f6379; }
.wave { position: absolute; left: 0; top: 0; width: 100%; height: 100%; }
.wave path { fill: #6688bd; stroke: #8dabd6; stroke-width: 1; }
.name { position: absolute; left: 2px; top: 2px; height: 26px; padding: 0 4px; background: #0b1d34; opacity: .9; border-radius: 3px; font-weight: bold; color: #cfcfcf; }
.gain { position: absolute; left: 3px; bottom: 4px; display: flex; align-items: flex-end; gap: 3px; font-weight: bold; color: #cfcfcf; }
.gain svg, .gain span { background: #0b1d34; border-radius: 3px; }
.gain span { padding: 0 4px; height: 26px; }

.empty { flex: 1 0 85px; background: #1f1f1f; display: flex; }
.empty i { flex: 1; margin-left: var(--head); background: #242424; }
.scroller { display: flex; height: 29px; flex: none; background: #161616; }
.corner { width: 217px; background: #262626; }
.bar { flex: 1; padding: 9px 0 0 4px; }
.bar i { display: block; height: 12px; background: #373737; }
.tabs { height: 60px; flex: none; margin-top: 10px; border-top: 2px solid #000; background: linear-gradient(#0d0d0d 36px, #000 46px, #000 47px, #2a2a2a 47px, #2a2a2a 49px, #050505 49px); }
.tabs button { width: 39px; height: 34px; background: #1d1d1d; font-weight: bold; justify-content: flex-start; text-indent: -8px; padding-bottom: 4px; }
```
FILE: script.js
```js
// Timeline grid: a strong line every 32 bars, fine lines between them.
const MAJOR = 0.093;
const timeline = document.querySelector('.timeline');
const origin = timeline.getBoundingClientRect().left;
const period = timeline.clientWidth * MAJOR;
const NS = 'http://www.w3.org/2000/svg';

document.querySelectorAll('.grid').forEach((el) => {
  const box = el.getBoundingClientRect();
  const start = box.left + el.clientLeft - origin;
  const end = start + box.width;
  let minor = '';
  let major = '';
  const line = (x) => `M${Math.round(x - start)} 0h2v400h-2z`;
  for (let m = 0; m * period < end; m += 1) {
    major += line(m * period);
    for (let k = 2; k < 23; k += 1) {
      const x = m * period + (k * period) / 23;
      if (x > start - 2 && x < end) minor += line(x);
    }
  }
  const svg = document.createElementNS(NS, 'svg');
  svg.setAttribute('class', 'grid-lines');
  svg.innerHTML = `<path class="minor" d="${minor}"/><path class="major" d="${major}"/>`;
  el.prepend(svg);
});

// Envelopes: [x, height above centre, height below centre].
// Roughness: [until x, jitter, spike size]; a negative spike cuts inwards.
const waves = {
  mix: {
    cap: 46,
    rough: [[37, 3, 3], [180, 3, 5], [219, 5, 6], [296, 6, 17], [326, 6, 8], [877, 5, 9], [968, 3, 6]],
    channels: [
      { centre: 85, points: [[0,16,14],[34,13,15],[38,20,21],[68,21,21],[72,17,15],[76,21,21],[170,21,22],[182,25,23],[196,20,20],[214,19,18],[219,26,26],[290,25,26],[298,17,15],[303,17,15],[306,22,23],[326,25,26],[328,13,14],[330,38,38],[336,32,33],[480,33,32],[490,28,30],[505,34,33],[700,33,33],[877,32,34],[879,20,23],[895,16,16],[911,14,15],[915,20,20],[930,20,21],[948,19,20],[960,8,8],[968,1,1]] },
      { centre: 253, points: [[0,2,2],[37,2,2],[39,17,15],[64,17,15],[72,4,4],[75,17,15],[102,17,15],[107,4,5],[110,17,16],[180,20,17],[182,26,25],[219,26,26],[290,28,27],[299,9,9],[304,9,9],[307,20,22],[326,20,23],[328,6,12],[330,35,35],[336,31,31],[490,30,31],[680,31,31],[877,31,31],[880,13,14],[896,13,14],[902,5,5],[911,4,5],[915,14,15],[944,13,13],[954,4,3],[959,1,1],[968,1,1]] },
    ],
  },
  master: {
    cap: 72,
    rough: [[185, 12, -12], [222, 9, -14], [327, 12, -9], [480, 3, -9], [877, 1, -6], [950, 9, -9], [968, 1, 0]],
    channels: [
      { centre: 85, points: [[0,56,52],[14,52,54],[36,48,52],[40,60,62],[105,60,62],[109,45,48],[113,62,62],[196,62,60],[199,56,56],[218,54,56],[221,69,72],[294,73,71],[302,47,49],[309,66,68],[326,68,68],[328,55,54],[330,74,74],[877,75,75],[881,58,58],[900,54,56],[912,47,46],[917,60,58],[948,59,59],[955,38,39],[962,16,18],[968,1,1]] },
      { centre: 253, points: [[0,12,13],[16,12,11],[36,12,11],[39,52,42],[69,50,45],[74,15,12],[78,56,52],[104,50,40],[109,18,20],[113,54,50],[150,52,54],[180,52,50],[185,66,62],[196,73,70],[294,75,73],[302,28,25],[308,62,62],[326,60,62],[328,37,32],[330,74,74],[877,74,74],[880,44,44],[886,39,37],[897,42,42],[902,17,17],[912,15,16],[915,45,42],[948,44,40],[952,18,18],[961,7,5],[968,1,1]] },
    ],
  },
};

let seed = 7;
const random = () => {
  seed = (seed * 16807) % 2147483647;
  return seed / 2147483647;
};

function level(points, x, side) {
  let i = 1;
  while (i < points.length - 1 && points[i][0] < x) i += 1;
  const a = points[i - 1];
  const b = points[i];
  const t = Math.min(1, Math.max(0, (x - a[0]) / (b[0] - a[0])));
  return a[side] + (b[side] - a[side]) * t;
}

function edge(wave, channel, x, side) {
  const base = level(channel.points, x, side);
  if (base < 10) return base;
  const [, jitter, spike] = wave.rough.find(([until]) => x <= until);
  const scale = base < 18 ? 0.5 : 1;
  let value = base + (random() - 0.5) * jitter * scale;
  if (random() > 0.8) value += random() * spike * scale;
  return Math.min(wave.cap, value);
}

document.querySelectorAll('[data-wave]').forEach((svg) => {
  const wave = waves[svg.dataset.wave];
  svg.innerHTML = wave.channels.map((channel) => {
    const up = [];
    const down = [];
    for (let x = 0; x <= 968; x += 2) {
      up.push(`${x} ${(channel.centre - edge(wave, channel, x, 1)).toFixed(1)}`);
      down.unshift(`${x} ${(channel.centre + edge(wave, channel, x, 2)).toFixed(1)}`);
    }
    return `<path d="M${up.join('L')}L${down.join('L')}z"/>`;
  }).join('');
});
```
